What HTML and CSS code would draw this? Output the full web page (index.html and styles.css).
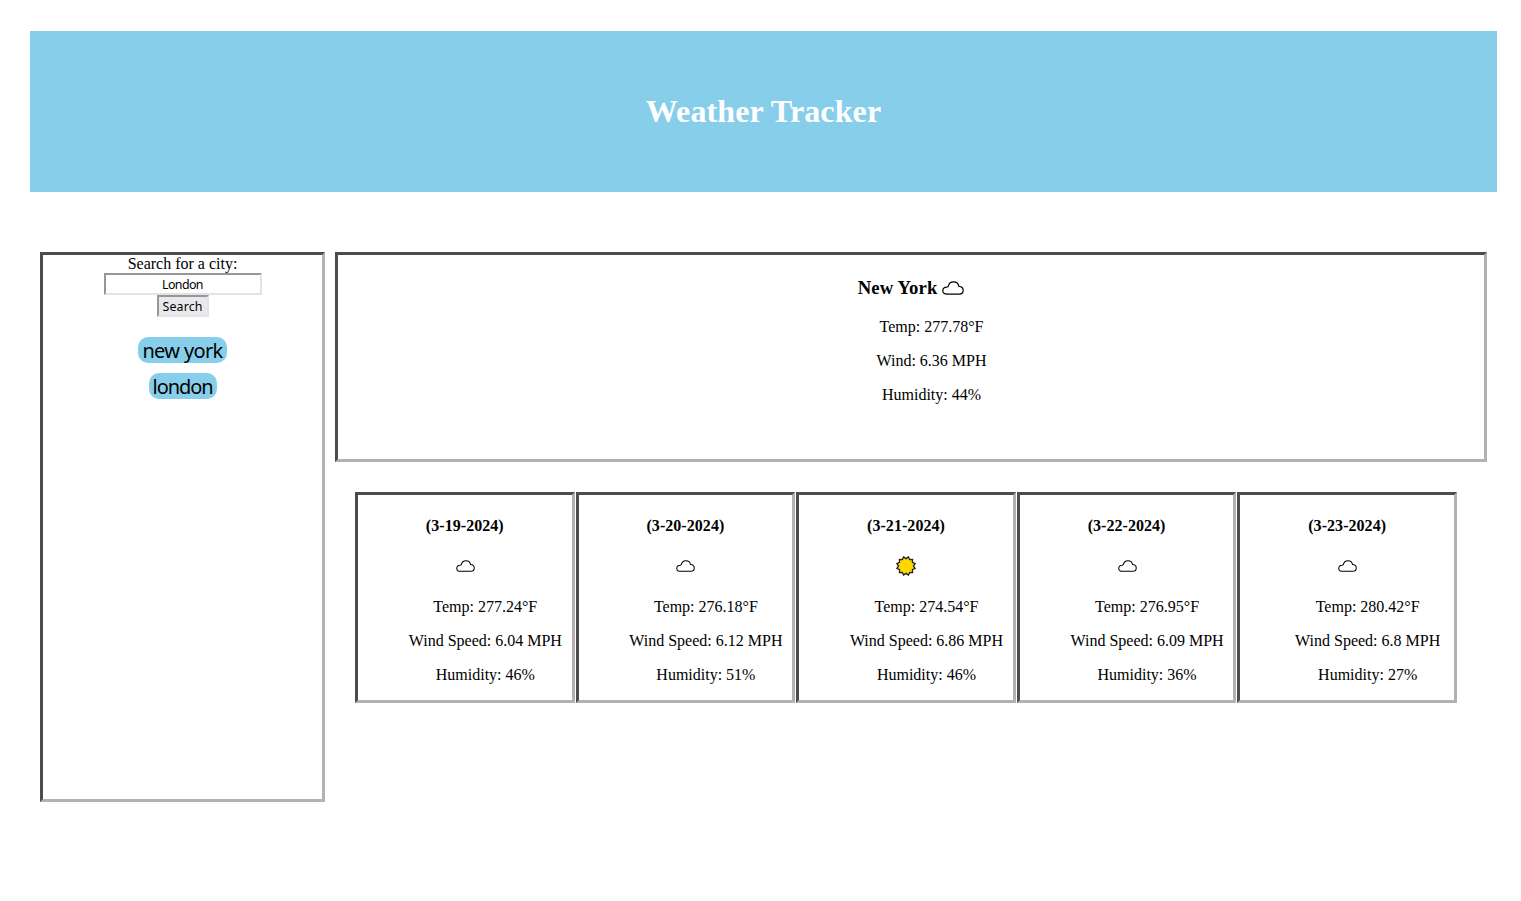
FILE: index.html
```html
<!DOCTYPE html>
<html lang="en">
<head>
<meta charset="utf-8">
<title>Weather Tracker</title>
<link rel="stylesheet" href="styles.css">
</head>
<body>
<svg class="defs" width="0" height="0">
  <symbol id="cloud" viewBox="0 0 22 14"><path d="M5 13.2C2.4 13.2.8 12 .8 9.8.8 7.6 2.5 6.2 4.7 6.1L6.1 5.5C6.7 2.6 8.7.8 11.5.8c2.9 0 4.9 1.6 5.4 4.5 2.7.2 4.3 1.7 4.3 4 0 2.4-1.5 3.9-4.1 3.9z"/></symbol>
</svg>
<header class="banner"><h1>Weather Tracker</h1></header>
<main class="layout">
  <aside class="sidebar">
    <label class="label" for="city">Search for a city:</label>
    <input class="city" id="city" type="text" value="London">
    <button class="search">Search</button>
    <button class="pill pill-first">new york</button>
    <button class="pill pill-second">london</button>
  </aside>
  <section class="content">
    <article class="current">
      <h3>New York <svg class="cloud-large"><use href="#cloud"/></svg></h3>
      <ul><li>Temp: 277.78°F</li><li>Wind: 6.36 MPH</li><li>Humidity: 44%</li></ul>
    </article>
    <div class="forecast">
      <article class="card"><h4>(3-19-2024)</h4><div class="icon"><svg class="cloud"><use href="#cloud"/></svg></div>
        <ul><li>Temp: 277.24°F</li><li>Wind Speed: 6.04 MPH</li><li>Humidity: 46%</li></ul></article>
      <article class="card"><h4>(3-20-2024)</h4><div class="icon"><svg class="cloud"><use href="#cloud"/></svg></div>
        <ul><li>Temp: 276.18°F</li><li>Wind Speed: 6.12 MPH</li><li>Humidity: 51%</li></ul></article>
      <article class="card"><h4>(3-21-2024)</h4><div class="icon"><svg class="sun" viewBox="-10 -10 20 20"><polygon points="0,-7.4 2.4,-9.1 3.7,-6.4 6.6,-6.6 6.4,-3.7 9.1,-2.4 7.4,0 9.1,2.4 6.4,3.7 6.6,6.6 3.7,6.4 2.4,9.1 0,7.4 -2.4,9.1 -3.7,6.4 -6.6,6.6 -6.4,3.7 -9.1,2.4 -7.4,0 -9.1,-2.4 -6.4,-3.7 -6.6,-6.6 -3.7,-6.4 -2.4,-9.1"/></svg></div>
        <ul><li>Temp: 274.54°F</li><li>Wind Speed: 6.86 MPH</li><li>Humidity: 46%</li></ul></article>
      <article class="card"><h4>(3-22-2024)</h4><div class="icon"><svg class="cloud"><use href="#cloud"/></svg></div>
        <ul><li>Temp: 276.95°F</li><li>Wind Speed: 6.09 MPH</li><li>Humidity: 36%</li></ul></article>
      <article class="card"><h4>(3-23-2024)</h4><div class="icon"><svg class="cloud"><use href="#cloud"/></svg></div>
        <ul><li>Temp: 280.42°F</li><li>Wind Speed: 6.8 MPH</li><li>Humidity: 27%</li></ul></article>
    </div>
  </section>
</main>
</body>
</html>
```
FILE: styles.css
```css
* { box-sizing: border-box; }
body { margin: 0; padding: 31px 24px 0 30px; background: #fff; color: #000; font: 16px/18px "Liberation Serif", serif; text-align: center; }
.defs { display: block; }
.banner { height: 161px; padding-bottom: 2px; display: flex; align-items: center; justify-content: center; background: #87ceeb; color: #fff; }
h1 { margin: 0; font-size: 32px; line-height: 36px; letter-spacing: 0.12px; }
.layout { display: flex; gap: 10px; padding: 60px 10px 0; }
.sidebar, .current, .card { border: 3px solid; border-color: #4c4c4c #b2b2b2 #b2b2b2 #4c4c4c; }
.sidebar { width: 285px; height: 550px; flex: none; display: flex; flex-direction: column; align-items: center; }
.label { height: 18px; }
.city, .search { height: 22px; padding: 0; border: 2px solid; border-color: #979797 #e3e3e3 #e3e3e3 #979797; border-radius: 0; font: 12.4px/16px "Noto Sans", sans-serif; text-align: center; color: #000; }
.city { width: 158px; background: #fff; letter-spacing: -0.6px; }
.search { width: 52px; padding-top: 1px; background: #e9e9ed; letter-spacing: 0.15px; }
.pill { height: 26px; padding: 1px 0 0; border: 0; border-radius: 10px; background: #87ceeb; color: #000; font: 20px/25px "Noto Sans", sans-serif; letter-spacing: -0.65px; white-space: nowrap; }
.pill-first { width: 89px; margin-top: 20px; }
.pill-second { width: 68px; margin-top: 10px; letter-spacing: -1.1px; }
.content { flex: 1; }
.current { height: 210px; }
h3 { margin: 19px 0 0; font-size: 18.72px; line-height: 28px; letter-spacing: 0.13px; }
ul { margin: 16px 0; padding: 0 0 0 41px; list-style: none; display: grid; gap: 16px; }
.forecast { display: flex; gap: 1px; padding: 30px 30px 0 20px; }
.card { flex: 1; min-width: 0; height: 211px; }
h4 { margin: 22px 0 0; font-size: 16px; line-height: 18px; letter-spacing: 0.05px; }
.icon { height: 20px; margin-top: 21px; padding-left: 1px; display: flex; align-items: center; justify-content: center; }
.card ul { margin-top: 22px; }
.cloud, .cloud-large { fill: none; stroke: #000; stroke-width: 1.2; }
.cloud { width: 19px; height: 12px; }
.cloud-large { width: 22px; height: 14px; vertical-align: -1px; }
.sun { width: 20px; height: 20px; fill: #ffd800; stroke: #222; stroke-width: 1.3; }
```
